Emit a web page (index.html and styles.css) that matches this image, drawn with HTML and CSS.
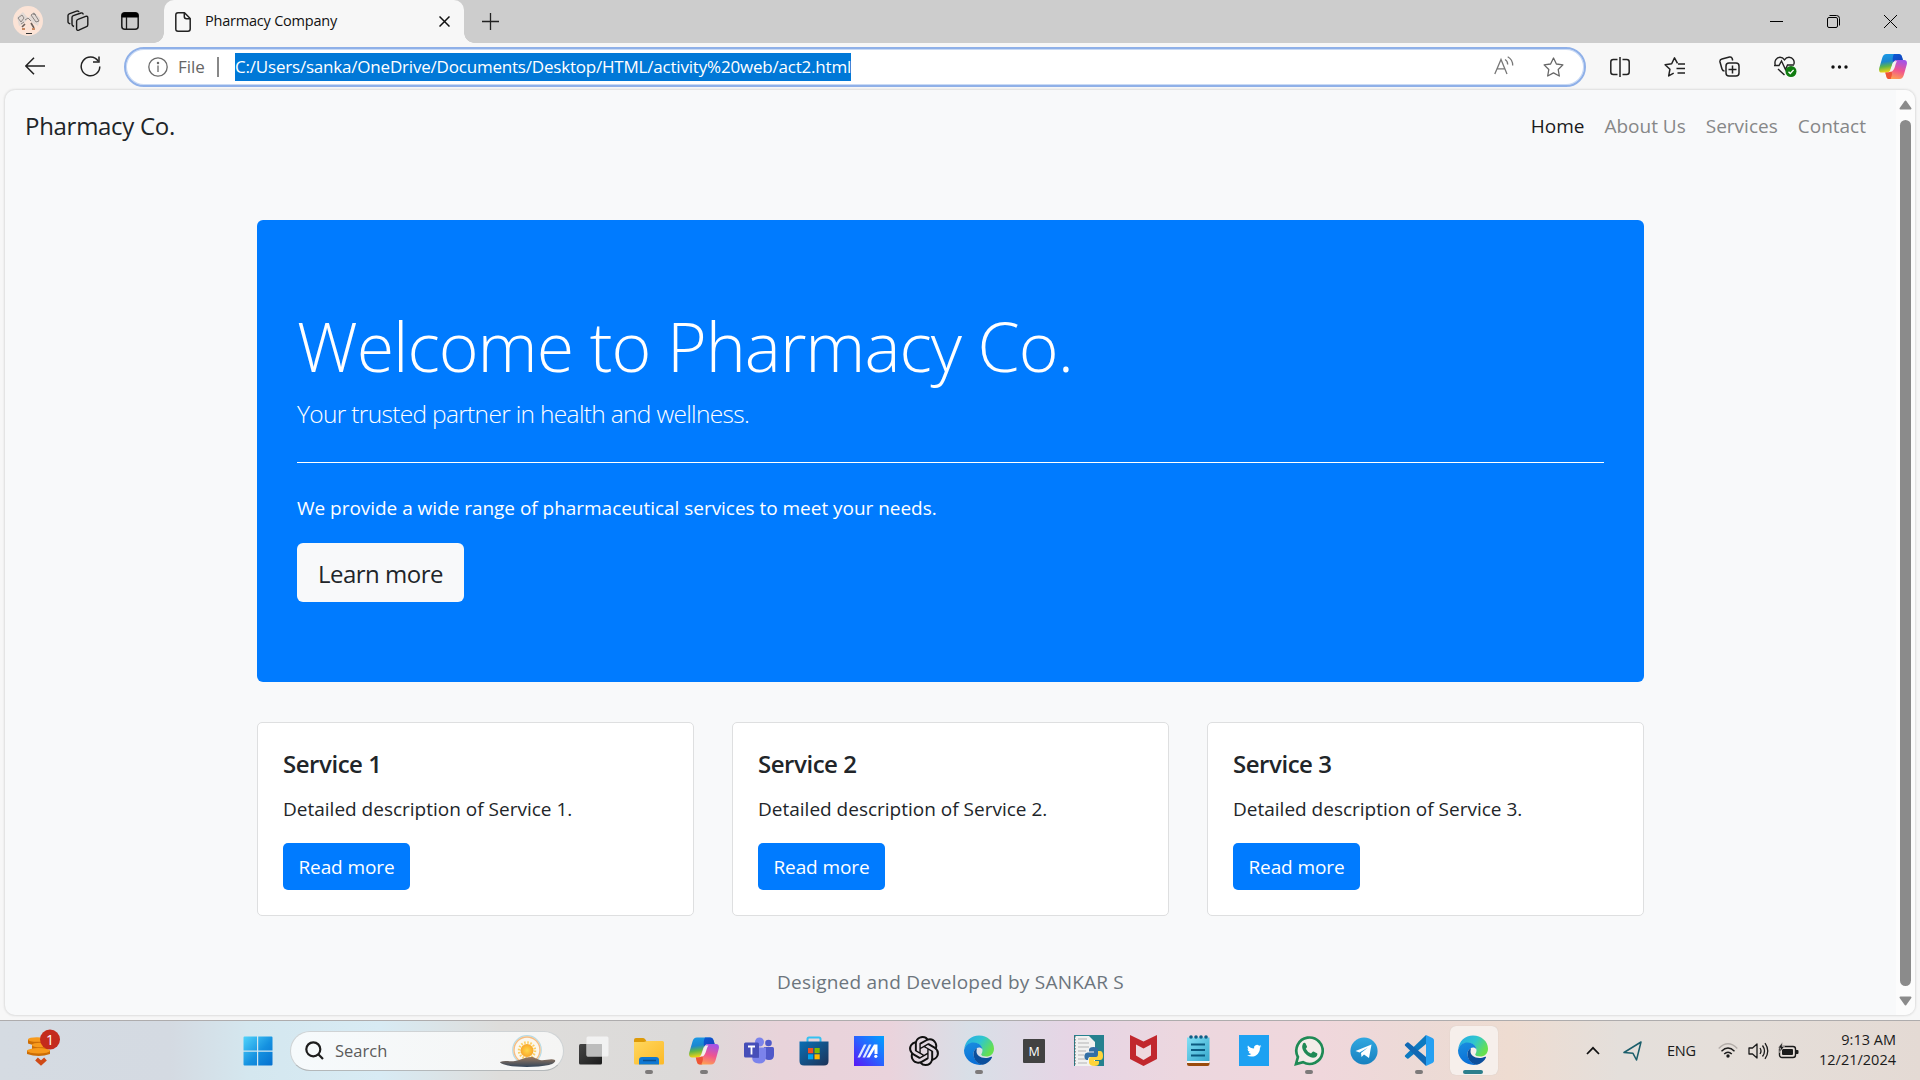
FILE: index.html
```html
<!DOCTYPE html>
<html lang="en">
<head>
<meta charset="utf-8">
<title>Pharmacy Company</title>
<link rel="stylesheet" href="styles.css">
</head>
<body>
<svg class="defs" width="0" height="0">
  <defs>
    <linearGradient id="cpBlue" x1="0" y1="0" x2="0.2" y2="1"><stop offset="0" stop-color="#1b9be8"/><stop offset=".45" stop-color="#1c87d0"/><stop offset=".7" stop-color="#5fb548"/><stop offset="1" stop-color="#f5d414"/></linearGradient>
    <linearGradient id="cpPink" x1="0.6" y1="0" x2="0.3" y2="1"><stop offset="0" stop-color="#a453e6"/><stop offset=".5" stop-color="#f0558f"/><stop offset="1" stop-color="#ffa54e"/></linearGradient>
    <linearGradient id="cpNavy" x1="0" y1="0" x2="1" y2="1"><stop offset="0" stop-color="#0a5ad6"/><stop offset="1" stop-color="#1b3fb8"/></linearGradient>
    <linearGradient id="edTop" x1="0" y1="0" x2="1" y2=".5"><stop offset="0" stop-color="#27a9e8"/><stop offset=".55" stop-color="#2fc6cf"/><stop offset="1" stop-color="#66e04f"/></linearGradient>
    <linearGradient id="edLeft" x1="0" y1="0" x2=".3" y2="1"><stop offset="0" stop-color="#1a8fe0"/><stop offset="1" stop-color="#0a6fd6"/></linearGradient>
    <linearGradient id="winG" x1="0" y1="0" x2="1" y2="1"><stop offset="0" stop-color="#4fd3fb"/><stop offset=".55" stop-color="#1591e0"/><stop offset="1" stop-color="#0670cf"/></linearGradient>
    <linearGradient id="folderG" x1="0" y1="0" x2="1" y2="1"><stop offset="0" stop-color="#ffd75e"/><stop offset="1" stop-color="#fcb927"/></linearGradient>
    <linearGradient id="asusG" x1="0" y1="1" x2="1" y2="0"><stop offset="0" stop-color="#5a16f5"/><stop offset=".5" stop-color="#2a62ff"/><stop offset="1" stop-color="#00a2ff"/></linearGradient>
    <linearGradient id="storeG" x1="0" y1="0" x2="1" y2="1"><stop offset="0" stop-color="#0a6fb5"/><stop offset="1" stop-color="#1d3358"/></linearGradient>
    <linearGradient id="padG" x1="0" y1="0" x2="1" y2="1"><stop offset="0" stop-color="#83e0f5"/><stop offset="1" stop-color="#35a7cc"/></linearGradient>
    <linearGradient id="tgG" x1="0" y1="0" x2="0" y2="1"><stop offset="0" stop-color="#31a8e0"/><stop offset="1" stop-color="#1780bf"/></linearGradient>
    <linearGradient id="tvG" x1="0" y1="0" x2="1" y2="1"><stop offset="0" stop-color="#454545"/><stop offset="1" stop-color="#1c1c1c"/></linearGradient>
    <linearGradient id="hillG" x1="0" y1="0" x2="0" y2="1"><stop offset="0" stop-color="#9b7a5f"/><stop offset="1" stop-color="#34465a"/></linearGradient>
    <radialGradient id="sunG"><stop offset="0" stop-color="#ffd84a"/><stop offset="1" stop-color="#f9a72b"/></radialGradient>
    <symbol id="copilot" viewBox="0 0 30 28">
      <path d="M8 .5h13c2 0 3 1 3.600 3l1 3.500H19c-3 0-4 2-5 5l-2 6c-1 2-2 2.500-4 2.500H3c-2.500 0-3.500-2-2.700-5L3.500 4.500C4.300 2 5.500.5 8 .5z" fill="url(#cpBlue)"/>
      <path d="M16 .5h5c2 0 3 1 3.600 3l1 3.500H19c-2 0-3 .8-4 3-.5-4-.5-7 1-9.500z" fill="url(#cpNavy)"/>
      <path d="M22 27.500H11c-2 0-2.700-1-3.200-3l-1-4H9c3 0 4-1.500 5-4.500l2-6.500C17 7.500 18 7 20 7h7c2.500 0 3.500 2 2.700 5l-3.200 11.500c-.8 2.500-2 4-4.500 4z" fill="url(#cpPink)"/>
      <path d="M13.500 27.500H11c-2 0-2.700-1-3.200-3l-1-4H9c2 0 3-.8 4-2.500 1.500 3 1 6-.5 9z" fill="#ee5436"/>
      <path d="M17 8.500h2.500c-1.200 1-1.600 3-2.200 5-1 3.300-2 5.700-4.300 6h-2c1.500-1 2-3 2.700-5 1-3.200 1.600-5.500 3.300-6z" fill="#f4f1ee"/>
    </symbol>
    <symbol id="edge" viewBox="0 0 30 30">
      <path d="M.2 14C1 5.500 7 0 15 0c8.500 0 15 6 15 13.200 0 5-3.500 7.800-7.800 7.800-3 0-5-1-5-2 0-.8 1.300-1.500 1.300-4.300 0-4-4-7.200-9-7.200-4.500 0-8 2.500-9.300 6.500z" fill="url(#edTop)"/>
      <path d="M.2 14c1.300-4.500 5-7 9.300-7 5 0 8.600 3 8.900 7-.8-1.600-2-2-3.400-2-3 0-5.500 3-5.500 6.500 0 5.500 4.500 10 9.500 10.600C9.500 31 0 24 0 15z" fill="url(#edLeft)"/>
      <path d="M13 12.500c-2 1-3.500 3-3.500 6C9.500 24.500 14 29 19 29.300c4-1 7.500-4 9-7.300.3-.7-.2-1-.8-.7-2 1-4 1.200-5.700 1.200-5.500 0-9-3-9-6.500 0-1.300.3-2.500.5-3.500z" fill="#0c4f9c"/>
    </symbol>
  </defs>
</svg>

<header class="tabstrip">
  <svg class="avatar" width="30" height="30" viewBox="0 0 30 30"><circle cx="15" cy="15" r="15" fill="#fbe3d6"/><path d="M4 11l6-5 5 6 6-6 6 6-2 8-5-3-5-4-5 5-4 2z" fill="#e3dad5"/><path d="M5 12l4-3 2 3-3 4zM18 9l3-2 5 8-3 1zM12 14l3-2 3 3M8 18l3-2M20 8l3 1" fill="none" stroke="#8d8683" stroke-width="1"/><path d="M9 21l3-3M18 17l3 5" stroke="#6b5f59" stroke-width="1.600"/><path d="M9 23h3M19 23h3" stroke="#c98a63" stroke-width="2"/><path d="M13 27.500h6" stroke="#333"/></svg>
  <svg class="ws-icon" width="22" height="22" viewBox="0 0 22 22" fill="none" stroke="#1b1b1b" stroke-width="1.400" stroke-linejoin="round"><path d="M11 9.300l7.700-2.900c1.300-.4 2.100.1 2.100 1.300v7c0 1-.4 1.600-1.300 1.900l-7.700 3.600c-1.300.5-2.200 0-2.200-1.200v-7.800c0-1 .5-1.600 1.400-1.900z"/><path d="M7 16.500l-1-.5c-.6-.4-1-1-1-1.700V7.500c0-.8.500-1.500 1.300-1.800L14 3c1.200-.4 2 .2 2.200 1.500"/><path d="M3.300 14l-1.500-.8C1.200 12.800 1 12.300 1 11.700V5.500c0-.8.400-1.400 1.200-1.700L9.500 1.100c1.300-.4 2.200.2 2.400 1"/></svg>
  <svg class="vt-icon" width="18" height="18" viewBox="0 0 18 18"><rect x=".8" y=".8" width="16.400" height="16.400" rx="3" fill="none" stroke="#1b1b1b" stroke-width="1.500"/><path d="M1 5V3.500Q1 1 3.500 1h11Q17 1 17 3.500V5z" fill="#000" stroke="#000"/><path d="M5.500 5v12" stroke="#1b1b1b" stroke-width="1.300"/></svg>
  <div class="tab">
    <svg width="16" height="20" viewBox="0 0 16 20" fill="none" stroke="#222" stroke-width="1.500" stroke-linejoin="round"><path d="M3 .8h6.500l5.700 5.700V17q0 2.200-2.200 2.200H3Q.8 19.200.8 17V3Q.8.8 3 .8z"/><path d="M9.300 1v3.500Q9.300 6.700 11.500 6.700H15"/></svg>
    <span class="tab-title">Pharmacy Company</span>
    <svg class="tab-close" width="11" height="11" viewBox="0 0 11 11" stroke="#111" stroke-width="1.500"><path d="M.5.500l10 10M10.500.5l-10 10"/></svg>
  </div>
  <svg class="new-tab" width="17" height="17" viewBox="0 0 17 17" stroke="#222" stroke-width="1.300"><path d="M8.500 0v17M0 8.500h17"/></svg>
  <div class="window-buttons">
    <svg width="13" height="13" viewBox="0 0 13 13"><path d="M0 6.500h13" stroke="#000"/></svg>
    <svg width="13" height="13" viewBox="0 0 13 13" fill="none" stroke="#000"><rect x=".5" y="2.500" width="10" height="10" rx="1.500"/><path d="M2.500.5h7q3 0 3 3v7"/></svg>
    <svg width="13" height="13" viewBox="0 0 13 13" stroke="#000"><path d="M0 0l13 13M13 0L0 13"/></svg>
  </div>
</header>

<div class="toolbar">
  <svg class="back" width="20" height="18" viewBox="0 0 20 18" fill="none" stroke="#222" stroke-width="1.500"><path d="M20 9H1M9 .7L.8 9 9 17.300"/></svg>
  <svg class="reload" width="21" height="21" viewBox="0 0 21 21" fill="none" stroke="#222" stroke-width="1.500"><path d="M18.200 5.200A9.300 9.300 0 1 0 19.800 10.500"/><path d="M19 .500V6h-6"/></svg>
  <div class="address">
    <svg width="20" height="20" viewBox="0 0 20 20" fill="none" stroke="#6a6a6a" stroke-width="1.300"><circle cx="10" cy="10" r="9.200"/><path d="M10 8.500V15"/><circle cx="10" cy="5.900" r=".6" fill="#6a6a6a"/></svg>
    <span class="scheme">File</span>
    <span class="divider"></span>
    <span class="url">C:/Users/sanka/OneDrive/Documents/Desktop/HTML/activity%20web/act2.html</span>
    <svg class="read-aloud" width="20" height="20" viewBox="0 0 20 20" fill="none" stroke="#777" stroke-width="1.300"><path d="M.8 18L7 3.500 13 18M3 12.800h8"/><path d="M11 3.500c1.800.9 2.700 2.500 2.700 5M13.700.8c3.300 1.800 5 4.700 5 8.700" /></svg>
    <svg class="star" width="21" height="20" viewBox="0 0 21 20" fill="none" stroke="#666" stroke-width="1.300" stroke-linejoin="round"><path d="M10.500 1l2.900 6 6.500.9-4.700 4.600 1.100 6.500-5.800-3.100L4.700 19l1.100-6.500L1.100 7.900 7.600 7z"/></svg>
  </div>
  <div class="tools">
    <svg width="20" height="20" viewBox="0 0 20 20" fill="none" stroke="#222" stroke-width="1.500"><path d="M7.500 2.500H3.300Q.8 2.500.8 5v10q0 2.500 2.500 2.500h4.200M12.500 2.500h4.200q2.500 0 2.500 2.500v10q0 2.500-2.500 2.500h-4.200M10 0v20"/></svg>
    <svg width="21" height="20" viewBox="0 0 21 20" fill="none" stroke="#222" stroke-width="1.500" stroke-linejoin="round"><path d="M13.500 6.300L10.500.9 7.700 6.800l-6.600.9L5.900 12.300l-1.200 6.600 5-2.700M14 7h7M12.500 11.500H21M13.500 16H21"/></svg>
    <svg width="21" height="21" viewBox="0 0 21 21" fill="none" stroke="#222" stroke-width="1.500"><rect x="7" y="7" width="13" height="13" rx="3"/><path d="M13.500 9.500v8M9.500 13.500h8M13.700 4.500l-.5-2Q12.500.5 10.500 1L3 3Q.5 3.700 1 6l2 7q.6 2 2.500 2"/></svg>
    <svg class="health" width="23" height="21" viewBox="0 0 23 21" fill="none" stroke="#222" stroke-width="1.400"><path d="M1.300 9C0 5 2.500 1.300 6 1.300c2 0 3.500 1 4.500 2.500 1-1.500 2.700-2.500 4.500-2.500 4 0 6 3.500 4.800 7.200M4 13l6.500 6"/><path d="M0 9.500h5L7.500 5l4 8.500L13.500 9H20"/><circle cx="17" cy="15.500" r="5.500" fill="#107c10" stroke="none"/><path d="M14.500 15.700l1.800 1.800 3.300-3.600" stroke="#fff"/></svg>
    <svg width="17" height="4" viewBox="0 0 17 4" fill="#111"><circle cx="2" cy="2" r="1.700"/><circle cx="8.500" cy="2" r="1.700"/><circle cx="15" cy="2" r="1.700"/></svg>
    <svg class="cp" width="28" height="27"><use href="#copilot"/></svg>
  </div>
</div>

<div class="viewport">
  <div class="page">
    <nav class="navbar">
      <span class="brand">Pharmacy Co.</span>
      <div class="links"><a class="active">Home</a><a>About Us</a><a>Services</a><a>Contact</a></div>
    </nav>
    <main class="container">
      <section class="jumbotron">
        <h1>Welcome to Pharmacy Co.</h1>
        <p class="lead">Your trusted partner in health and wellness.</p>
        <hr>
        <p class="intro">We provide a wide range of pharmaceutical services to meet your needs.</p>
        <a class="btn btn-light">Learn more</a>
      </section>
      <section class="cards">
        <article class="card"><h5>Service 1</h5><p>Detailed description of Service 1.</p><a class="btn btn-primary">Read more</a></article>
        <article class="card"><h5>Service 2</h5><p>Detailed description of Service 2.</p><a class="btn btn-primary">Read more</a></article>
        <article class="card"><h5>Service 3</h5><p>Detailed description of Service 3.</p><a class="btn btn-primary">Read more</a></article>
      </section>
    </main>
    <footer>Designed and Developed by SANKAR S</footer>
  </div>
  <div class="scrollbar">
    <svg width="13" height="10" viewBox="0 0 13 10"><path d="M6.500 1.500L11.500 8.500h-10z" fill="#8b8b8b" stroke="#8b8b8b" stroke-width="2" stroke-linejoin="round"/></svg>
    <div class="thumb"></div>
    <svg width="13" height="10" viewBox="0 0 13 10"><path d="M6.500 8.500L11.500 1.500h-10z" fill="#8b8b8b" stroke="#8b8b8b" stroke-width="2" stroke-linejoin="round"/></svg>
  </div>
</div>

<footer class="taskbar">
  <svg class="widget" width="34" height="38" viewBox="0 0 34 38"><g fill="#cc6d05"><path d="M1 10.500h16v4q-8 3-16 0zM5 16h17v4q-8 3-17 0zM0 21.500h23v3.500q-11 4-23 0z"/></g><g fill="#f79a1c"><ellipse cx="10" cy="10.500" rx="9" ry="2.300"/><ellipse cx="13.500" cy="16" rx="8.500" ry="2.300"/><ellipse cx="11.500" cy="21.800" rx="11.500" ry="2.700"/></g><path d="M9.500 30l4.500 4 4.500-4" fill="none" stroke="#cf4a17" stroke-width="4"/><circle cx="23" cy="10.500" r="10" fill="#c42b1c"/><text x="23" y="15.500" text-anchor="middle" class="badge-text">1</text></svg>
  <svg class="start" width="30" height="30" viewBox="0 0 30 30"><path fill="url(#winG)" d="M1.500.5H14v14H.5v-13Q.5.5 1.500.5zM15.200.5h13.300q1 0 1 1v13H15.200zM.5 15.700H14v13.800H1.500q-1 0-1-1zM15.200 15.700h14.300v12.800q0 1-1 1H15.200z"/></svg>
  <div class="search">
    <svg width="19" height="19" viewBox="0 0 19 19" fill="none" stroke="#1d1d1d" stroke-width="2.200"><circle cx="8.300" cy="8.300" r="7"/><path d="M13.300 13.300L18 18"/></svg>
    <span class="search-text">Search</span>
    <svg class="sun" width="56" height="33" viewBox="0 0 56 33"><circle cx="27" cy="15" r="14.300" fill="#fbf7ee" stroke="#b5dce8" stroke-width="1.200"/><circle cx="27" cy="15" r="13" fill="none" stroke="#f6bd83" stroke-width="1.400"/><circle cx="27" cy="15.500" r="8" fill="none" stroke="#fbcf62" stroke-width="2.500" stroke-dasharray="1.600 1.540"/><circle cx="27" cy="15.500" r="6.500" fill="url(#sunG)"/><path d="M0 27c5-2 10 0 15-1 6-1 10-4 16-4 4 0 5 2 9 3 5 1 11-2 15 0 1 2-2 4-6 5-12 2.500-33 2.500-43 0-4-1-6-2-6-3z" fill="url(#hillG)"/></svg>
  </div>
  <div class="apps">
    <div class="app"><svg width="30" height="29" viewBox="0 0 30 29"><rect x="0" y="8" width="23" height="20.500" rx="1.500" fill="url(#tvG)"/><rect x="7.500" y=".5" width="22" height="20" rx="1.500" fill="#f6f6f6" fill-opacity=".86"/><path d="M7.500 8H23v12.500H9q-1.500 0-1.500-1.500z" fill="#b5b5b5" fill-opacity=".8"/></svg></div>
    <div class="app run"><svg width="30" height="28" viewBox="0 0 30 28"><path d="M0 7V3q0-2 2-2h7q1 0 2 1l2 3v3z" fill="#dd9a09"/><path d="M0 5h10l3-1h15.500Q30 4 30 5.500V26q0 1.500-1.500 1.500h-27Q0 27.500 0 26z" fill="url(#folderG)"/><path d="M5 27.500V23q0-3 3-3h14q3 0 3 3v4.500z" fill="#0f78d2"/><path d="M9 23.500h13" stroke="#0a4f8f" stroke-width="1.500"/></svg></div>
    <div class="app run"><svg width="30" height="28"><use href="#copilot"/></svg></div>
    <div class="app"><svg width="30" height="27" viewBox="0 0 30 27"><circle cx="24.500" cy="6" r="3.300" fill="#5059c9"/><path d="M20 10h8.500q1.500 0 1.500 1.500V18q0 5-5 5-5 0-5-5z" fill="#5059c9"/><circle cx="15.500" cy="5" r="4.500" fill="#7b83eb"/><path d="M8 10.500h14v9q0 7-7 7t-7-7z" fill="#7b83eb"/><path d="M15 10.500V21H9l-.7-3v-7.500z" fill="#575fc6"/><rect y="5.500" width="15" height="15" rx="1.500" fill="#464eb8"/><path d="M4 9.500h7M7.500 9.500v8" stroke="#fff" stroke-width="1.800"/></svg></div>
    <div class="app"><svg width="30" height="30" viewBox="0 0 30 30"><path d="M8.500 7V3q0-1.500 1.500-1.500h10q1.500 0 1.500 1.500v4" fill="none" stroke="#35c1f1" stroke-width="2"/><path d="M.5 5.500h29V25q0 4.500-4.500 4.500H5Q.5 29.500.5 25z" fill="url(#storeG)"/><path fill="#f25022" d="M9 12h5.200v5.200H9z"/><path fill="#7fba00" d="M15.500 12h5.200v5.200h-5.200z"/><path fill="#00a4ef" d="M9 18.300h5.200v5H9z"/><path fill="#ffb900" d="M15.500 18.300h5.200v5h-5.200z"/></svg></div>
    <div class="app"><svg width="30" height="30" viewBox="0 0 30 30"><path fill="url(#asusG)" d="M0 0h30v30H0z"/><path d="M3.500 21.500L10 8.500h2.500L6 21.500zM8.500 21.500L15 8.500h2.500L11 21.500z" fill="#dce9ff"/><path d="M12.500 21.500L20 8.500h3.500v9.500h-3v-5l-5 8.500z" fill="#fff"/><circle cx="21.800" cy="20.300" r="1.600" fill="#fff"/></svg></div>
    <div class="app"><svg width="30" height="30" viewBox="0 0 24 24"><path fill="#111" d="M22.282 9.821a5.985 5.985 0 0 0-.516-4.910 6.046 6.046 0 0 0-6.510-2.900A6.065 6.065 0 0 0 4.981 4.182a5.985 5.985 0 0 0-3.998 2.900 6.046 6.046 0 0 0 .743 7.097 5.980 5.980 0 0 0 .511 4.911 6.051 6.051 0 0 0 6.515 2.900A5.985 5.985 0 0 0 13.260 24a6.056 6.056 0 0 0 5.772-4.206 5.990 5.990 0 0 0 3.998-2.900 6.056 6.056 0 0 0-.748-7.073zM13.260 22.430a4.476 4.476 0 0 1-2.876-1.040l.141-.081 4.779-2.758a.795.795 0 0 0 .393-.681v-6.737l2.020 1.169a.071.071 0 0 1 .038.052v5.583a4.504 4.504 0 0 1-4.495 4.493zM3.600 18.304a4.471 4.471 0 0 1-.535-3.014l.142.085 4.783 2.759a.771.771 0 0 0 .780 0l5.843-3.369v2.332a.080.080 0 0 1-.033.062L9.740 19.950a4.500 4.500 0 0 1-6.140-1.646zM2.341 7.896a4.485 4.485 0 0 1 2.366-1.973V11.600a.766.766 0 0 0 .388.677l5.814 3.354-2.020 1.169a.076.076 0 0 1-.071 0l-4.830-2.786A4.504 4.504 0 0 1 2.341 7.872zm16.597 3.855l-5.833-3.387L15.119 7.200a.076.076 0 0 1 .071 0l4.830 2.791a4.494 4.494 0 0 1-.676 8.105v-5.678a.790.790 0 0 0-.407-.667zm2.010-3.023l-.141-.085-4.774-2.782a.776.776 0 0 0-.785 0L9.409 9.230V6.897a.066.066 0 0 1 .028-.061l4.830-2.787a4.500 4.500 0 0 1 6.680 4.660zm-12.640 4.135l-2.020-1.164a.080.080 0 0 1-.038-.057V6.075a4.500 4.500 0 0 1 7.375-3.453l-.142.080L8.704 5.460a.795.795 0 0 0-.393.681zm1.097-2.365l2.602-1.500 2.607 1.500v2.999l-2.597 1.500-2.607-1.500z"/></svg></div>
    <div class="app run"><svg width="30" height="31"><use href="#edge"/></svg></div>
    <div class="app"><svg width="22" height="24" viewBox="0 0 22 24"><rect width="22" height="24" rx="1" fill="#424242"/><text x="11" y="16.500" text-anchor="middle" class="m-text">M</text></svg></div>
    <div class="app"><svg width="30" height="31" viewBox="0 0 30 31"><path fill="#25818f" d="M0 0h30v31H0z"/><path d="M1 1h14l6 6v24H1z" fill="#f1f1f0"/><path d="M4 4h9M4 8h11M4 12h11M4 16h8M4 20h6M4 24h8M4 28h9" stroke="#c8c8c8" stroke-width="1.500"/><path d="M1 1v30" stroke="#555" stroke-dasharray="1.500 1.500"/><path d="M15 15q0-3 4.500-3t4.500 3v5q0 2-2 2h-6q-2 0-2 3h-1.500Q10 24 10.500 20q.5-2.500 3-2.500H20v-1h-5z" fill="#336fa5"/><path d="M24 16h2q3 0 3 5 0 4-3 4h-6v1h5v2q0 3-4.500 3T15 28v-4q0-2 2-2h5q2 0 2-3z" fill="#ffd43b"/></svg></div>
    <div class="app"><svg width="27" height="31" viewBox="0 0 27 31"><path fill="#c1272d" d="M0 0l13.500 6.500L27 0v24L13.500 31 0 24z"/><path fill="#eed8df" d="M6 9.500l7.500 4 7.500-4v11L13.500 25 6 20.500z"/></svg></div>
    <div class="app"><svg width="23" height="31" viewBox="0 0 23 31"><path fill="#9a4b0c" d="M0 27h22.500v2q0 2-2 2H2q-2 0-2-2z"/><path fill="#f4f4f4" d="M0 25h22.500v3H0z"/><path fill="url(#padG)" d="M0 2.500h22.500V26H0z"/><path d="M4 9.500h14M4 15h14M4 20.500h14" stroke="#0b5a80" stroke-width="1.800"/><g fill="#0e5f86"><circle cx="4" cy="2" r="1.800"/><circle cx="9" cy="2" r="1.800"/><circle cx="14" cy="2" r="1.800"/><circle cx="19" cy="2" r="1.800"/></g></svg></div>
    <div class="app"><svg width="30" height="31" viewBox="0 0 30 31"><path fill="#1da1f2" d="M0 0h30v31H0z"/><g transform="translate(8 8.500) scale(.6)"><path fill="#fff" d="M23.953 4.570a10 10 0 0 1-2.825.775 4.958 4.958 0 0 0 2.163-2.723c-.951.555-2.005.959-3.127 1.184a4.920 4.920 0 0 0-8.384 4.482C7.690 8.095 4.067 6.130 1.640 3.162a4.822 4.822 0 0 0-.666 2.475c0 1.710.870 3.213 2.188 4.096a4.904 4.904 0 0 1-2.228-.616v.060a4.923 4.923 0 0 0 3.946 4.827 4.996 4.996 0 0 1-2.212.085 4.936 4.936 0 0 0 4.604 3.417 9.867 9.867 0 0 1-6.102 2.105c-.390 0-.779-.023-1.170-.067a13.995 13.995 0 0 0 7.557 2.209c9.053 0 13.998-7.496 13.998-13.985 0-.210 0-.420-.015-.630A9.935 9.935 0 0 0 24 4.590z"/></g></svg></div>
    <div class="app run"><svg width="30" height="31" viewBox="0 0 30 31"><path d="M2 29l1.900-7A13.200 13.200 0 1 1 9 27.200z" fill="#f3ece8" stroke="#1f8a55" stroke-width="2.700"/><path fill="#1f8a55" d="M9 8.500q1-1.200 2.300-.5l1.700 3.500q.2.800-1.200 2.300 1.700 3.500 5.200 4.800l1.700-1.800q.6-.5 1.300-.1l3 1.500q.6.400.3 1.500-.7 3-4.300 3-4.500-.5-8.500-5Q6.800 13 9 8.500z"/></svg></div>
    <div class="app"><svg width="28" height="28" viewBox="0 0 28 28"><circle cx="14" cy="14" r="13.600" fill="url(#tgG)"/><path d="M5.500 14L21.500 7.500 19 21l-5-3.500-2.500 2.500-.5-4 7-5.500-8.500 5z" fill="#fff"/></svg></div>
    <div class="app run"><svg width="30" height="31" viewBox="0 0 30 31"><path d="M22 0v9L4.500 23.500q-.7.500-1.400 0l-2-1.800q-.7-.7 0-1.500z" fill="#0d7ac0"/><path d="M22 31v-9L4.500 7.500q-.7-.5-1.400 0l-2 1.800q-.7.700 0 1.500z" fill="#1068b4"/><path d="M22 0l6.500 3q1.500.7 1.500 2.200v20.600q0 1.500-1.500 2.200L22 31z" fill="#26a0f2"/></svg></div>
    <div class="app current"><svg width="30" height="31"><use href="#edge"/></svg></div>
  </div>
  <div class="tray">
    <svg class="chev" width="14" height="9" viewBox="0 0 14 9" fill="none" stroke="#111" stroke-width="1.700"><path d="M1 8l6-6.200L13 8"/></svg>
    <svg class="loc" width="19" height="20" viewBox="0 0 19 20" fill="none" stroke="#1b5e6b" stroke-width="1.500" stroke-linejoin="round"><path d="M18 1L1 11.500l9 .8L13.500 19z"/></svg>
    <span class="lang">ENG</span>
    <svg class="wifi" width="20" height="15" viewBox="0 0 20 15" fill="none" stroke="#1b1b1b" stroke-width="1.400"><path d="M.7 5.500q9.300-9.300 18.600 0" stroke="#b3ada9"/><path d="M3.500 8.300q6.500-6.400 13 0M6.200 11q3.800-3.600 7.600 0"/><circle cx="10" cy="13" r="1.700" fill="#1b1b1b" stroke="none"/></svg>
    <svg class="vol" width="21" height="18" viewBox="0 0 21 18" fill="none" stroke="#1b1b1b" stroke-width="1.300" stroke-linejoin="round"><path d="M1 6h3.500L9 2v14l-4.500-4H1z"/><path d="M12 6q2 3 0 6M14.500 3.500q4 5.500 0 11M17 1.200q5.500 7.800 0 15.600"/></svg>
    <svg class="bat" width="21" height="17" viewBox="0 0 21 17"><rect x="1.500" y="4.500" width="16" height="11" rx="2.500" fill="none" stroke="#1b1b1b" stroke-width="1.400"/><rect x="4" y="7" width="11" height="6" rx="1" fill="#1b1b1b"/><path d="M18 8h1.500q1 0 1 1v2q0 1-1 1H18z" fill="#1b1b1b"/><path d="M4.500 0L0 6h2.500L1.500 10.500 6.500 4.500H4z" fill="#1b1b1b" stroke="#e5deda" stroke-width=".6"/></svg>
    <div class="clock"><span class="time">9:13 AM</span><span class="date">12/21/2024</span></div>
  </div>
</footer>
</body>
</html>
```
FILE: styles.css
```css
* { box-sizing: border-box; }
body { margin: 0; width: 1920px; height: 1080px; overflow: hidden; display: flex; flex-direction: column; background: #f7f7f7; font-family: "Open Sans", "Noto Sans", sans-serif; color: #212529; white-space: nowrap; }
svg { display: block; flex: none; }
.defs { position: absolute; }

.tabstrip { flex: none; height: 43px; background: #cdcdcd; display: flex; align-items: center; padding-left: 13px; }
.avatar { margin-top: -1px; }
.ws-icon { margin-left: 24px; margin-top: -1px; }
.vt-icon { margin-left: 32px; margin-top: -1px; }
.tab { width: 300px; height: 43px; margin-left: 25px; padding: 0 14px 0 11px; display: flex; align-items: center; background: #f7f7f7; border-radius: 10px 10px 0 0; position: relative; }
.tab::before, .tab::after { content: ""; position: absolute; bottom: 0; width: 10px; height: 10px; }
.tab::before { left: -10px; background: radial-gradient(circle at 0 0, #cdcdcd 9.500px, #f7f7f7 10px); }
.tab::after { right: -10px; background: radial-gradient(circle at 100% 0, #cdcdcd 9.500px, #f7f7f7 10px); }
.tab-title { font-size: 14.500px; letter-spacing: -.21px; margin-left: 14px; color: #111; margin-top: -2px; }
.tab-close { margin-left: auto; }
.new-tab { margin-left: 18px; margin-top: -1px; }
.window-buttons { margin-left: auto; display: flex; gap: 44px; padding-right: 23px; }

.toolbar { flex: none; height: 47px; display: flex; align-items: center; padding-left: 25px; }
.back { margin-top: -1px; }
.reload { margin-left: 35px; }
.address { width: 1462px; height: 40px; margin: 1px 0 0 23px; border: 2px solid #8fb0e8; border-radius: 20px; background: #fff; box-shadow: inset 0 0 0 1px #c9daf5; display: flex; align-items: center; padding: 0 20px 0 22px; }
.scheme { width: 28px; margin-left: 10px; font-size: 17px; line-height: 26px; color: #666; }
.divider { width: 2px; height: 20px; margin-left: 11px; background: #888; }
.url { margin-left: 16px; height: 28px; line-height: 28px; background: #0078d7; color: #fff; font-size: 17px; letter-spacing: -.2px; }
.read-aloud { margin: -2px 0 0 auto; }
.star { margin-left: 29px; }
.tools { flex: 1; display: flex; align-items: center; gap: 34px; padding-left: 24px; }
.cp { margin-left: -3px; }

.viewport { flex: none; height: 925px; margin: 0 5px; display: flex; border-radius: 10px; overflow: hidden; background: #f8f9fa; box-shadow: 0 0 2px 1px #dedede; }
.page { width: 1891px; }
.navbar { height: 70px; padding: 1px 20px 0; display: flex; align-items: center; justify-content: space-between; }
.brand { font-size: 24px; letter-spacing: -.29px; }
.links { display: flex; padding-top: 1px; }
.links a { padding: 0 10px; font-size: 19px; color: #868788; }
.links .active { color: #1a1a1b; }
.container { width: 1387px; margin: 60px auto 0; }
.jumbotron { height: 462px; padding: 84px 40px 80px; background: #007bff; border-radius: 6px; color: #fff; }
h1 { margin: 0 0 7px; font-size: 68px; line-height: 84px; font-weight: 300; letter-spacing: -1px; }
.lead { margin: 0; font-size: 24.500px; line-height: 37px; font-weight: 300; letter-spacing: -.68px; }
hr { margin: 30px 0; border: 0; height: 1px; background: #fff; }
.intro { margin: 0 0 19px; font-size: 19px; line-height: 31px; letter-spacing: -.03px; }
.btn { display: inline-flex; align-items: center; justify-content: center; border-radius: 5px; }
.btn-light { width: 167px; height: 59px; padding-top: 2px; background: #f8f9fa; color: #212529; font-size: 24px; letter-spacing: -.5px; border-radius: 6px; }
.cards { margin-top: 40px; display: flex; justify-content: space-between; }
.card { width: 437px; height: 194px; padding: 26px 25px; border: 1px solid #dedfe0; border-radius: 5px; background: #fff; }
.card h5 { margin: 0 0 15px; font-size: 24px; line-height: 30px; font-weight: 600; letter-spacing: -.45px; }
.card p { margin: 0 0 19px; font-size: 19px; line-height: 30px; }
.btn-primary { width: 127px; height: 47px; padding-top: 1px; background: #007bff; color: #fff; font-size: 19px; letter-spacing: -.1px; }
.page footer { margin-top: 51px; text-align: center; line-height: 30px; font-size: 19px; letter-spacing: .22px; color: #6c757d; }
.scrollbar { width: 19px; background: #fcfcfc; display: flex; flex-direction: column; align-items: center; justify-content: space-between; padding: 10px 0 9px; }
.thumb { width: 11px; height: 866px; margin-top: -1px; border-radius: 6px; background: #8b8b8b; }

.taskbar { flex: none; height: 60px; margin-top: 5px; border-top: 1px solid #aeacad; display: flex; align-items: center; background: linear-gradient(90deg, #d5dbe2 0, #d4dae2 170px, #d4e7ef 250px, #d8ebf4 380px, #dedddb 500px, #dcdad9 680px, #e8d3da 780px, #ead3dc 890px, #d8dfe7 970px, #e6d5e5 1070px, #ecd7df 1180px, #f0d7dc 1320px, #ecdad6 1420px, #eedcd1 1510px, #e4dfdb 1620px, #e5dfda 1720px, #e4dad4 1920px); }
.widget { margin: -6px 0 0 27px; }
.badge-text { font: 14px "Open Sans", sans-serif; fill: #fff; }
.m-text { font: 12.500px "Open Sans", sans-serif; fill: #fff; }
.start { margin-left: 182px; }
.search { width: 274px; height: 40px; margin-left: 17px; border: 1px solid #cfd3d5; border-bottom-color: #b4b8ba; border-radius: 20px; background: linear-gradient(90deg, #f6fafc, #f5f5f4); display: flex; align-items: center; padding: 0 7px 0 14px; }
.search-text { margin-left: 11px; font-size: 16.500px; color: #5b5b5b; }
.sun { margin: 1px 0 0 auto; }
.apps { display: flex; height: 59px; margin-left: 3px; }
.app { width: 54.950px; height: 59px; display: flex; align-items: center; justify-content: center; position: relative; }
.app > svg { position: relative; }
.run::after, .current::after { content: ""; position: absolute; bottom: 6px; left: 50%; width: 8px; height: 4px; margin-left: -4px; border-radius: 2px; background: #7d7a7a; }
.current::before { content: ""; position: absolute; left: 4px; top: 5px; width: 48px; height: 49px; border-radius: 6px; background: #f6efeb; box-shadow: 0 0 1px #c9c0bb; }
.current::after { width: 20px; margin-left: -10px; background: #2c7f8c; }
.tray { flex: 1; display: flex; align-items: center; padding-right: 24px; color: #1b1b1b; font-size: 14.500px; }
.chev { margin-left: 85px; }
.loc { margin-left: 23px; }
.lang { margin-left: 25px; width: 28px; letter-spacing: -.18px; }
.wifi { margin-left: 23px; }
.vol { margin-left: 10px; }
.bat { margin-left: 9px; }
.clock { margin: -2px 0 0 auto; display: flex; flex-direction: column; align-items: flex-end; line-height: 20px; }
```
